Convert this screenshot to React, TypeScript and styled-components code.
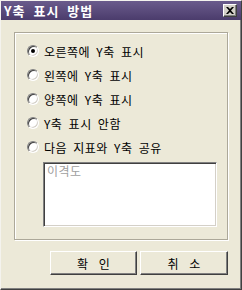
import styled, { createGlobalStyle } from "styled-components";

const GlobalStyle = createGlobalStyle`
    html, body {
        margin: 0;
        padding: 0;
        background: #ece9d8;
    }

    body {
        font-family: "Noto Sans CJK KR", "Noto Sans", sans-serif;
        font-size: 12px;
    }
`;

const options = ["오른쪽에 Y축 표시", "왼쪽에 Y축 표시", "양쪽에 Y축 표시", "Y축 표시 안함", "다음 지표와 Y축 공유"];

export default function App() {
    return (
        <>
            <GlobalStyle />
            <Window>
                <TitleBar>
                    <Title>Y축 표시 방법</Title>
                    <CloseButton type="button">
                        <svg width="8" height="7" viewBox="0 0 8 7">
                            <path d="M0 0h2l2 2 2-2h2L5 3.5 8 7H6L4 5 2 7H0l3-3.5z" fill="#000" />
                        </svg>
                    </CloseButton>
                </TitleBar>

                <Content>
                    <GroupBox>
                        {options.map((label, i) => (
                            <RadioRow key={label}>
                                <Radio $checked={i === 0} />
                                <span>{label}</span>
                            </RadioRow>
                        ))}

                        <ListBox>
                            <ListItem>이격도</ListItem>
                        </ListBox>
                    </GroupBox>

                    <ButtonRow>
                        <Button type="button" $width={87}>확 인</Button>
                        <Button type="button" $width={88}>취 소</Button>
                    </ButtonRow>
                </Content>
            </Window>
        </>
    );
}

const Window = styled.div`
    width: 242px;
    height: 290px;
    box-sizing: border-box;
    display: flex;
    flex-direction: column;
    background: #ece9d8;
    border-top: 1px solid #f4f3ee;
    border-left: 1px solid #f4f3ee;
    border-right: 1px solid #404040;
    border-bottom: 1px solid #404040;
    box-shadow: inset -1px -1px 0 #808080;
`;

const TitleBar = styled.div`
    height: 19px;
    display: flex;
    align-items: center;
    justify-content: space-between;
    padding: 0 4px 0 3px;
    background: linear-gradient(to bottom, #6a5b8c, #4b3c6c);
`;

const Title = styled.span`
    color: #fff;
    font-weight: bold;
    font-size: 13px;
    letter-spacing: 1px;
    word-spacing: 4px;
    line-height: 19px;
`;

const CloseButton = styled.button`
    width: 14px;
    height: 13px;
    padding: 0;
    display: flex;
    align-items: center;
    justify-content: center;
    background: #d4d0c8;
    border: 1px solid;
    border-color: #fff #404040 #404040 #fff;
    box-shadow: inset -1px -1px 0 #808080;
`;

const Content = styled.div`
    padding: 12px 0 0 13px;
`;

const GroupBox = styled.div`
    width: 214px;
    height: 208px;
    box-sizing: border-box;
    padding: 6px 0 0 12px;
    border: 1px solid #aca899;
    box-shadow: 1px 1px 0 #fff, inset 1px 1px 0 #fff;
`;

const RadioRow = styled.label`
    height: 24px;
    display: flex;
    align-items: center;
    gap: 5px;
    color: #000;
    white-space: nowrap;
    letter-spacing: 0.5px;
    word-spacing: 3px;
`;

const Radio = styled.span<{ $checked?: boolean }>`
    width: 12px;
    height: 12px;
    box-sizing: border-box;
    flex-shrink: 0;
    display: flex;
    align-items: center;
    justify-content: center;
    border-radius: 50%;
    background: #fff;
    border: 1px solid;
    border-color: #808080 #fff #fff #808080;
    box-shadow: inset 1px 1px 0 #404040, inset -1px -1px 0 #d4d0c8;

    &::after {
        content: "";
        width: 4px;
        height: 4px;
        border-radius: 50%;
        background: #000;
        display: ${(p) => (p.$checked ? "block" : "none")};
    }
`;

const ListBox = styled.div`
    margin: 3px 0 0 16px;
    width: 174px;
    height: 65px;
    box-sizing: border-box;
    background: #fff;
    border: 1px solid;
    border-color: #808080 #fff #fff #808080;
    box-shadow: inset 1px 1px 0 #404040, inset -1px -1px 0 #d4d0c8;
`;

const ListItem = styled.div`
    padding: 1px 3px;
    color: #a0a0a0;
    line-height: 14px;
    letter-spacing: 0.5px;
`;

const ButtonRow = styled.div`
    display: flex;
    gap: 3px;
    margin-top: 11px;
    padding-left: 36px;
`;

const Button = styled.button<{ $width: number }>`
    width: ${(p) => p.$width}px;
    height: 24px;
    padding: 0;
    font-family: inherit;
    font-size: 12px;
    word-spacing: 8px;
    color: #000;
    background: #ece9d8;
    border: 1px solid;
    border-color: #fff #404040 #404040 #fff;
    box-shadow: inset -1px -1px 0 #808080;
`;
